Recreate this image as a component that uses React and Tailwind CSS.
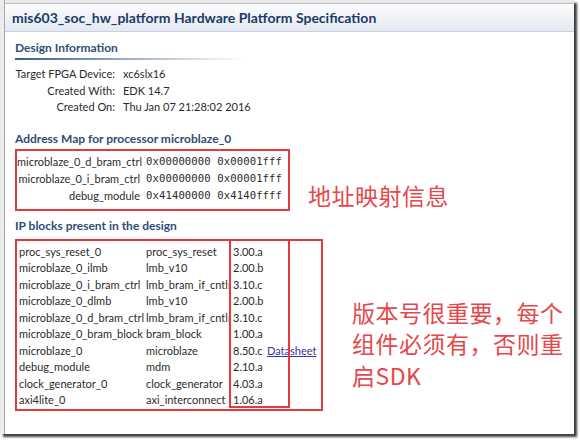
const designInfo = [
  ['Target FPGA Device:', 'xc6slx16'],
  ['Created With:', 'EDK 14.7'],
  ['Created On:', 'Thu Jan 07 21:28:02 2016'],
];

const addressMap = [
  ['microblaze_0_d_bram_ctrl', '0x00000000', '0x00001fff'],
  ['microblaze_0_i_bram_ctrl', '0x00000000', '0x00001fff'],
  ['debug_module', '0x41400000', '0x4140ffff'],
];

const ipBlocks = [
  ['proc_sys_reset_0', 'proc_sys_reset', '3.00.a'],
  ['microblaze_0_ilmb', 'lmb_v10', '2.00.b'],
  ['microblaze_0_i_bram_ctrl', 'lmb_bram_if_cntlr', '3.10.c'],
  ['microblaze_0_dlmb', 'lmb_v10', '2.00.b'],
  ['microblaze_0_d_bram_ctrl', 'lmb_bram_if_cntlr', '3.10.c'],
  ['microblaze_0_bram_block', 'bram_block', '1.00.a'],
  ['microblaze_0', 'microblaze', '8.50.c', true],
  ['debug_module', 'mdm', '2.10.a'],
  ['clock_generator_0', 'clock_generator', '4.03.a'],
  ['axi4lite_0', 'axi_interconnect', '1.06.a'],
];

function SectionHeading({ children }) {
  return (
    <div className="h-[16px] leading-[16px] text-[12px] font-bold text-[#2f4d78] whitespace-nowrap">{children}</div>
  );
}

export default function App() {
  return (
    <div className="w-[580px] h-[440px] bg-white overflow-hidden font-['Lato','Noto_Sans_CJK_SC',sans-serif]">
      <div className="w-[574px] h-[434px] flex flex-col bg-white border-l-[4px] border-l-[#ececec] shadow-[3px_3px_2px_rgba(0,0,0,0.75)]">
        <div className="flex-1 flex flex-col border-l border-l-[#a8a8a8]">
          {/* tab strip */}
          <div className="h-[4px] bg-[#e9e9e9] border-b border-[#bdbdbd]" />

          {/* title bar */}
          <div className="h-[28px] flex items-center pl-[7px] bg-gradient-to-b from-[#fdfdfe] to-[#e3e8f1] border-b border-[#c6d2e4]">
            <span className="text-[14px] font-bold text-[#1d3b66] whitespace-nowrap">
              mis603_soc_hw_platform Hardware Platform Specification
            </span>
          </div>

          <div className="pl-[10px] pt-[8px] text-[11px] text-[#2b2b2b] whitespace-nowrap">
            {/* Design Information */}
            <SectionHeading>Design Information</SectionHeading>
            <div className="mt-[2px] h-[2px] w-[230px] bg-gradient-to-r from-[#3d5c87] via-[#9fb0c8] to-transparent" />
            <div className="mt-[6px] grid grid-cols-[100px_auto] gap-x-[8px] w-fit">
              {designInfo.map(([k, v]) => (
                <div key={k} className="contents">
                  <div className="h-[16.5px] leading-[16.5px] text-right">{k}</div>
                  <div className="h-[16.5px] leading-[16.5px]">{v}</div>
                </div>
              ))}
            </div>

            {/* Address map */}
            <div className="mt-[15px]">
              <SectionHeading>Address Map for processor microblaze_0</SectionHeading>
            </div>
            <div className="mt-[2px] flex items-end">
              <div className="w-[275px] h-[62px] border-2 border-[#e23b3f] pt-[2px]">
                <div className="grid grid-cols-[123px_auto] gap-x-[6px]">
                  {addressMap.map(([n, a, b]) => (
                    <div key={n} className="contents">
                      <div className="h-[17px] leading-[17px] text-right">{n}</div>
                      <div className="h-[17px] leading-[17px] font-['DejaVu_Sans_Mono',monospace] text-[10.6px] tracking-[0.1px]">
                        {a} {b}
                      </div>
                    </div>
                  ))}
                </div>
              </div>
              <div className="ml-[18px] mb-[2px] text-[23px] leading-[28px] text-[#e5474d] tracking-[0.5px] font-['Noto_Sans_CJK_SC',sans-serif]">
                地址映射信息
              </div>
            </div>

            {/* IP blocks */}
            <div className="mt-[7px]">
              <SectionHeading>IP blocks present in the design</SectionHeading>
            </div>
            <div className="mt-[5px] flex items-start">
              <div className="relative w-[308px] h-[172px] border-2 border-[#e23b3f] pt-[3px] pl-[2px]">
                {ipBlocks.map(([name, type, ver, sheet]) => (
                  <div key={name + type} className="flex h-[16.5px] leading-[16.5px]">
                    <div className="w-[127px] overflow-hidden">{name}</div>
                    <div className="w-[83px] mr-[4px] overflow-hidden">{type}</div>
                    <div className="w-[34px]">{ver}</div>
                    {sheet && <span className="text-[#3434a8] underline">Datasheet</span>}
                  </div>
                ))}
                <div className="absolute left-[212px] top-[-2px] bottom-[1px] w-[61px] border-2 border-[#e23b3f]" />
              </div>
              <div className="ml-[29px] mt-[58px] text-[23px] leading-[31.5px] text-[#e5474d] tracking-[0.5px] font-['Noto_Sans_CJK_SC',sans-serif]">
                版本号很重要，每个
                <br />
                组件必须有，否则重
                <br />
                启SDK
              </div>
            </div>
          </div>
        </div>
      </div>
    </div>
  );
}
